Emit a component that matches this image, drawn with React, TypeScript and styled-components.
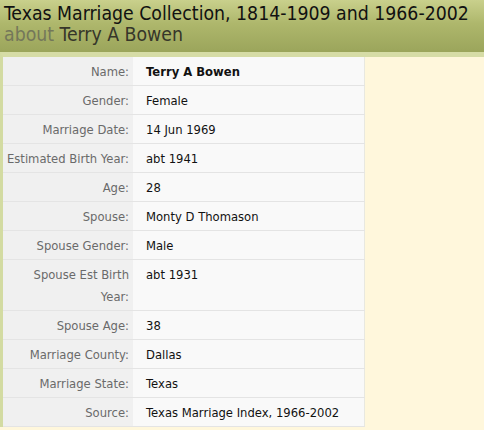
import styled, { createGlobalStyle } from "styled-components";

const GlobalStyle = createGlobalStyle`
  body {
    margin: 0;
    background-color: #fff7dc;
  }
`;

const Page = styled.div`
  width: 484px;
  height: 430px;
  overflow: hidden;
  background-color: #fff7dc;
`;

const Header = styled.header`
  height: 52px;
  padding: 3px 0 0 4px;
  box-sizing: border-box;
  background: linear-gradient(to bottom, #c9d08c 0%, #aeb76c 45%, #9ba55b 100%);
  font-family: "DejaVu Sans Condensed", "DejaVu Sans", sans-serif;
  font-size: 19.3px;
  line-height: 21px;
  white-space: nowrap;
`;

const Title = styled.h1`
  margin: 0;
  font-size: inherit;
  font-weight: normal;
  color: #111;
`;

const Subtitle = styled.h2`
  margin: 0;
  font-size: inherit;
  font-weight: normal;
  color: #36362a;
`;

const About = styled.span`
  color: #74775a;
`;

const Body = styled.div`
  border-top: 5px solid #d6dca6;
  border-left: 3px solid #d3dba2;
  display: flex;
`;

const Table = styled.table`
  width: 362px;
  border-collapse: collapse;
  border-right: 1px solid #e8e8e0;
  font-family: "DejaVu Sans", Verdana, sans-serif;
  font-size: 11.6px;
  line-height: 22px;
`;

const Row = styled.tr`
  border-bottom: 1px solid #e4e4e4;
`;

const Label = styled.th`
  box-sizing: border-box;
  width: 130px;
  padding: 4px 4px 2px 2px;
  text-align: right;
  vertical-align: top;
  font-weight: normal;
  color: #6a6a6a;
  background-color: #f0f0f0;
`;

const Value = styled.td<{ $strong?: boolean }>`
  padding: 4px 8px 2px 13px;
  vertical-align: top;
  color: #111;
  font-weight: ${(p) => (p.$strong ? "bold" : "normal")};
  background-color: #f9f9f9;
`;

const rows: [string, string][] = [
  ["Name:", "Terry A Bowen"],
  ["Gender:", "Female"],
  ["Marriage Date:", "14 Jun 1969"],
  ["Estimated Birth Year:", "abt 1941"],
  ["Age:", "28"],
  ["Spouse:", "Monty D Thomason"],
  ["Spouse Gender:", "Male"],
  ["Spouse Est Birth Year:", "abt 1931"],
  ["Spouse Age:", "38"],
  ["Marriage County:", "Dallas"],
  ["Marriage State:", "Texas"],
  ["Source:", "Texas Marriage Index, 1966-2002"],
];

export default function App() {
  return (
    <Page>
      <GlobalStyle />
      <Header>
        <Title>Texas Marriage Collection, 1814-1909 and 1966-2002</Title>
        <Subtitle>
          <About>about</About> Terry A Bowen
        </Subtitle>
      </Header>
      <Body>
        <Table>
          <tbody>
            {rows.map(([label, value], i) => (
              <Row key={label}>
                <Label>{label}</Label>
                <Value $strong={i === 0}>{value}</Value>
              </Row>
            ))}
          </tbody>
        </Table>
      </Body>
    </Page>
  );
}
